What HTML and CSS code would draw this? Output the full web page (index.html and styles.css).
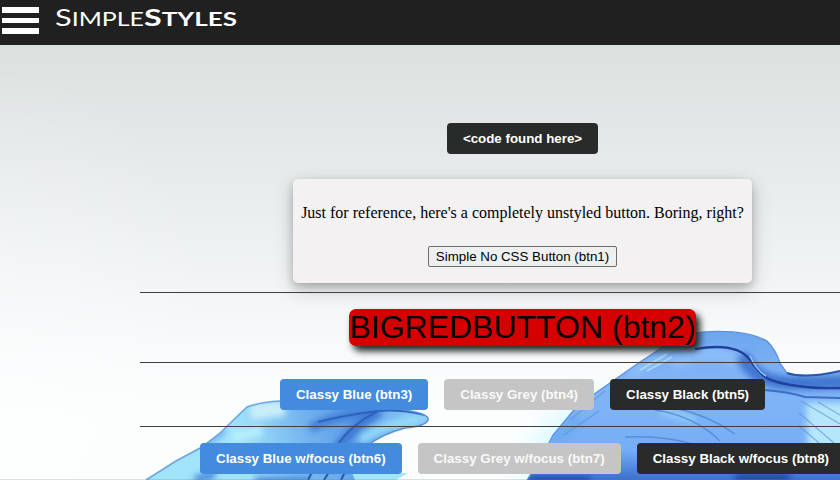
FILE: index.html
```html
<!DOCTYPE html>
<html lang="en">
<head>
<meta charset="utf-8">
<title>SimpleStyles</title>
<link rel="stylesheet" href="styles.css">
</head>
<body>
<svg class="backdrop" viewBox="0 0 840 480" aria-hidden="true">
  <defs>
    <linearGradient id="left" x1="150" y1="480" x2="420" y2="400" gradientUnits="userSpaceOnUse">
      <stop offset="0" stop-color="#a0e4fa"/><stop offset=".35" stop-color="#a0e2fa"/><stop offset=".58" stop-color="#72b4ee"/><stop offset=".75" stop-color="#5c9de8"/><stop offset="1" stop-color="#8ccdf6"/>
    </linearGradient>
    <linearGradient id="right" x1="0" y1="331" x2="0" y2="480" gradientUnits="userSpaceOnUse">
      <stop offset="0" stop-color="#6da6ee"/><stop offset=".35" stop-color="#82b5f7"/><stop offset=".8" stop-color="#75aef5"/><stop offset="1" stop-color="#3a70cb"/>
    </linearGradient>
    <filter id="soft" x="-20%" y="-20%" width="140%" height="140%"><feGaussianBlur stdDeviation="3"/></filter>
    <filter id="fine" x="-10%" y="-10%" width="120%" height="120%"><feGaussianBlur stdDeviation=".6"/></filter>
    <filter id="haze" x="-50%" y="-50%" width="200%" height="200%"><feGaussianBlur stdDeviation="12"/></filter>
    <clipPath id="leftShape"><path d="M146 480L176 461 202 447 219 434 247 407Q260 402 280 401L330 398 405 410Q430 414 428 420T405 428Q382 434 367 446L350 465 356 480Z"/></clipPath>
    <clipPath id="rightShape"><path d="M527 480L540 460 553 435 573 411 597 392 640 362 663 347Q680 334 702 332 745 329 767 341 776 350 780 363L787 373Q805 379 840 371V480Z"/></clipPath>
  </defs>
  <path d="M510 480L550 420 600 385 590 480Z" fill="#dafaff" filter="url(#haze)"/>
  <g clip-path="url(#leftShape)">
    <rect x="140" y="395" width="300" height="90" fill="url(#left)"/>
    <g filter="url(#soft)" fill="none">
      <path d="M250 412L285 408" stroke="#c9eef8" stroke-width="16"/>
      <path d="M232 438L262 430" stroke="#b7effb" stroke-width="10"/>
      <path d="M310 428Q335 415 378 411" stroke="#3f7ed6" stroke-width="9"/>
      <path d="M336 450Q352 428 380 411" stroke="#3c79d2" stroke-width="10"/>
      <path d="M360 441Q380 425 420 419" stroke="#94dcfa" stroke-width="9"/>
      <path d="M203 446L225 430" stroke="#72aded" stroke-width="6"/>
      <path d="M195 480L215 474M255 481H310" stroke="#4587da" stroke-width="8"/>
    </g>
    <path d="M318 422Q345 415 378 411M338 444Q352 424 378 411M378 411Q400 409 425 415" fill="none" stroke="#2e62bd" stroke-width="2" filter="url(#fine)"/>
  </g>
  <g filter="url(#fine)" fill="none">
    <path d="M146 480L176 461 202 447 219 434 247 407Q260 402 280 401" stroke="#6da5df" stroke-width="1.6"/>
    <path d="M405 410Q430 414 428 420T405 428Q382 434 367 446" stroke="#5c93d8" stroke-width="1.6"/>
  </g>
  <path d="M355 480L352 473H408L396 480Z" fill="#a0e5fa"/>
  <path d="M308 480L312 472M324 480L329 472M341 480L345 472" stroke="#2855ad" stroke-width="2"/>
  <g clip-path="url(#rightShape)">
    <rect x="520" y="325" width="320" height="160" fill="url(#right)"/>
    <g filter="url(#soft)" fill="none">
      <path d="M806 403H850V450H808Z" fill="#b5e7fa"/>
      <path d="M672 364Q710 346 738 362" stroke="#8bbdf8" stroke-width="14"/>
      <path d="M630 375L668 353" stroke="#8ebff8" stroke-width="8"/>
      <path d="M742 355Q755 383 790 383T845 382" stroke="#4177d0" stroke-width="14"/>
      <path d="M553 440L580 420" stroke="#6dabef" stroke-width="14"/>
      <path d="M660 411L695 420" stroke="#95d0fa" stroke-width="6"/>
      <path d="M530 481H590M735 478H790" stroke="#1b4aa6" stroke-width="8"/>
    </g>
    <g filter="url(#fine)" fill="none">
      <path d="M695 349Q737 342 750 360T771 380Q797 389 840 388" stroke="#233f9e" stroke-width="2.4"/>
      <path d="M750 356Q756 370 766 376" stroke="#91c5fa" stroke-width="1.5"/>
      <path d="M765 390Q790 392 805 397L840 398" stroke="#3b6ec7" stroke-width="2"/>
      <path d="M655 410Q695 416 720 441M675 408Q710 416 735 434M625 437Q665 435 700 446" stroke="#4d86da" stroke-width="1.5" opacity=".8"/>
      <path d="M570 420L605 391M564 435L599 411M801 401L840 424M799 413L834 443M818 402L840 415M798 425L819 443" stroke="#5790dc" stroke-width="1.2" opacity=".65"/>
      <path d="M640 370L667 354M647 371L672 357" stroke="#a4dafa" stroke-width="1.5"/>
    </g>
  </g>
  <path d="M527 480L540 460 553 435 573 411 597 392 640 362 663 347Q680 334 702 332 745 329 767 341 776 350 780 363L787 373Q805 379 840 371" fill="none" stroke="#5a90dd" stroke-width="1.2" filter="url(#fine)"/>
  <path d="M787 373Q805 379 840 371" fill="none" stroke="#2b53aa" stroke-width="2" filter="url(#fine)"/>
  <path d="M0 479.5H840" stroke="#777" stroke-opacity=".22"/>
</svg>
<header class="topbar">
  <div class="menu"><span></span><span></span><span></span></div>
  <svg class="brand" width="200" height="45" viewBox="0 0 200 45">
    <text x="0" y="26" textLength="89" lengthAdjust="spacingAndGlyphs"><tspan class="cap">S</tspan>IMPLE</text>
    <text class="strong" x="89" y="26" textLength="93" lengthAdjust="spacingAndGlyphs"><tspan class="cap">S</tspan>TYLES</text>
  </svg>
</header>
<main class="content">
  <button class="btn black">&lt;code found here&gt;</button>
  <section class="card">
    <p>Just for reference, here's a completely unstyled button. Boring, right?</p>
    <button class="plain">Simple No CSS Button (btn1)</button>
  </section>
  <hr>
  <button class="big">BIGREDBUTTON (btn2)</button>
  <hr>
  <div class="row">
    <button class="btn blue">Classy Blue (btn3)</button>
    <button class="btn grey">Classy Grey (btn4)</button>
    <button class="btn black">Classy Black (btn5)</button>
  </div>
  <hr>
  <div class="row">
    <button class="btn blue">Classy Blue w/focus (btn6)</button>
    <button class="btn grey">Classy Grey w/focus (btn7)</button>
    <button class="btn black">Classy Black w/focus (btn8)</button>
  </div>
</main>
</body>
</html>
```
FILE: styles.css
```css
* { box-sizing: border-box; }
body {
  margin: 0;
  height: 480px;
  overflow: hidden;
  background: radial-gradient(ellipse 220px 300px at 0 360px, rgba(255,255,255,.35), transparent),
    linear-gradient(#dce0df 45px, #e4e8e8 140px, #eef1f2 245px, #f8fafb 350px, #fcfefe 420px, #fcfefe);
  font-family: "Liberation Serif", serif;
}
.backdrop { position: absolute; inset: 0; width: 840px; height: 480px; z-index: -1; }
.topbar { display: flex; height: 45px; background: #202020; }
.menu { display: flex; flex-direction: column; gap: 5px; width: 55px; padding: 7px 0 0 2px; }
.menu span { width: 37px; height: 5.6px; background: #fff; }
.brand { display: block; fill: #fff; font-family: Lato, sans-serif; font-size: 19px; }
.brand .cap { font-size: 23.5px; }
.brand .strong { font-weight: bold; }
.content {
  display: flex;
  flex-direction: column;
  align-items: center;
  width: 765px;
  margin-left: 140px;
  padding-top: 78px;
}
button { font-family: "Liberation Sans", Arial, sans-serif; font-size: 13.333px; white-space: nowrap; }
.btn {
  height: 31px;
  flex: none;
  padding: 0 16px;
  border: 0;
  border-radius: 4px;
  color: #fff;
  font-weight: bold;
}
.black { background: #292b2a; }
.blue { background: #428bde; }
.grey { background: #c5c5c5; color: #f9f9f9; }
.card {
  display: flex;
  flex-direction: column;
  align-items: center;
  width: 459px;
  height: 104px;
  margin: 25px 0 9px;
  padding: 25px 8px 0;
  border-radius: 5px;
  background: #f3f1f2;
  box-shadow: 0 4px 8px rgba(0,0,0,.2), 0 6px 20px rgba(0,0,0,.19);
}
.card p { margin: 0; font-size: 16px; line-height: 18px; white-space: nowrap; }
.plain {
  width: 189px;
  height: 21px;
  margin-top: 24px;
  padding: 0;
  border: 1px solid #6c6e6e;
  border-radius: 2px;
  background: #eef0ef;
  color: #000;
}
hr { width: 100%; height: 1px; margin: 0; border: 0; background: #403e40; }
.big {
  width: 347px;
  height: 37px;
  margin: 16px 0;
  padding: 0;
  border: 0;
  border-radius: 7px;
  background: #d50000;
  color: #000;
  font-size: 32px;
  line-height: 37px;
  box-shadow: 4px 5px 7px #222;
}
.row { display: flex; justify-content: center; gap: 16px; margin: 16px 0; }
```
